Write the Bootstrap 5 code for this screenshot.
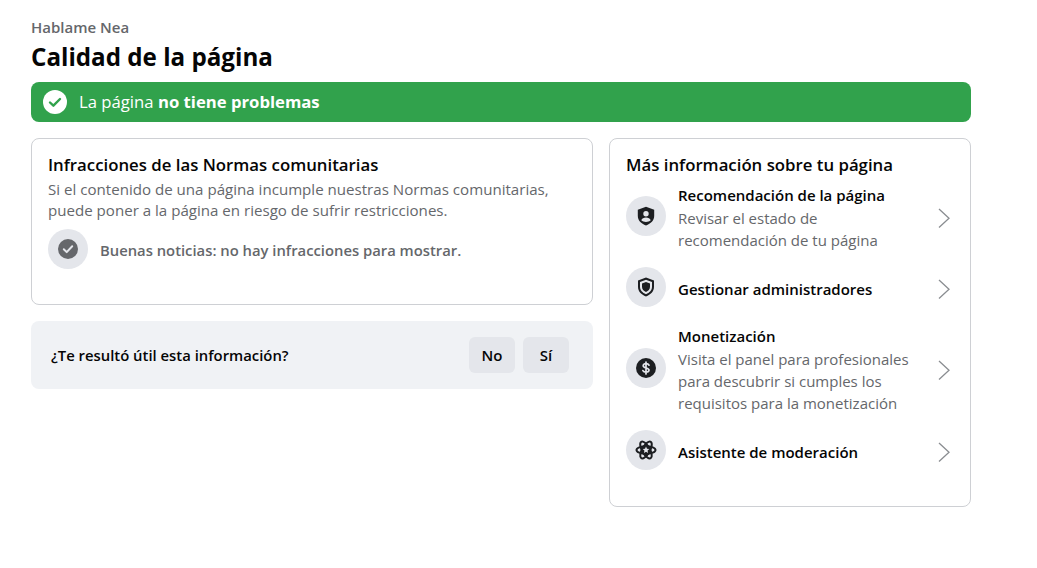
<!doctype html>
<html lang="es"><head><meta charset="utf-8"><title>Calidad de la página</title>
<link href="https://cdn.jsdelivr.net/npm/bootstrap@5.3.0/dist/css/bootstrap.min.css" rel="stylesheet">
<style>
body{font-family:"Open Sans","Noto Sans",sans-serif;background:#fff;color:#050505;overflow:hidden}
.pg-wrap{width:940px;margin-left:31px;padding-top:17px}
.pg-owner{font-size:15px;line-height:20px;font-weight:600;color:#65676b}
.pg-title{font-size:24.2px;line-height:32px;font-weight:700;color:#050505;margin:4px 0 9px}
.pg-banner{background:#31a24c;color:#fff;height:40px;border-radius:8px;padding:0 12px;font-size:16.7px;gap:12px}
.pg-banner b{font-weight:700}
.pg-cols{margin-top:16px;gap:16px}
.pg-left{width:562px}
.pg-right{width:362px;height:369px;padding:16px;border:1px solid #ced0d4;border-radius:8px}
.pg-card{height:167px;border:1px solid #ced0d4;border-radius:8px;padding:16px}
.pg-h{font-size:16.8px;line-height:20px;font-weight:600;color:#050505;margin:0}
.pg-card .pg-h{margin-bottom:4px}
.pg-sub{font-size:15.1px;line-height:21px;color:#65676b;margin:0}
.pg-circ{width:40px;height:40px;border-radius:50%;background:#e4e6eb;flex:none}
.pg-good{font-size:14.8px;font-weight:600;color:#65676b;gap:12px;margin-top:8px}
.pg-goodtxt{padding-top:2px}
.pg-ask{margin-top:16px;height:68px;background:#f0f2f5;border-radius:8px;padding:0 24px 0 20px;font-size:14.85px;font-weight:600}
.pg-btn{width:46px;height:36px;background:#e4e6eb;border:0;border-radius:6px;font-size:15px;font-weight:600;color:#050505;padding:0}
.pg-row{gap:12px;font-size:15px}
.pg-row b{display:block;font-weight:600;line-height:20px;color:#050505}
.pg-row span{display:block;color:#65676b;line-height:22px;font-size:15px;margin-top:2px}
.pg-txt{flex:1;padding-top:4px}
.pg-chev{margin:4px 3px 0 0;flex:none}
.pg-row1{height:68px;margin-top:7px}.pg-row2{height:40px;margin-top:17px}.pg-row3{height:90px;margin-top:16px}.pg-row4{height:40px;margin-top:17px}
</style></head><body>
<div class="pg-wrap">
<div class="pg-owner">Hablame Nea</div>
<h1 class="pg-title">Calidad de la página</h1>
<div class="pg-banner d-flex align-items-center">
<svg width="24" height="24" viewBox="0 0 24 24"><circle cx="12" cy="12" r="12" fill="#fff"/><path d="M7 12.5l3.4 3.2L17 9" fill="none" stroke="#31a24c" stroke-width="2.4" stroke-linecap="round" stroke-linejoin="round"/></svg>
<div>La página <b>no tiene problemas</b></div>
</div>
<div class="pg-cols d-flex align-items-start">
<div class="pg-left">
<div class="pg-card">
<h2 class="pg-h">Infracciones de las Normas comunitarias</h2>
<p class="pg-sub">Si el contenido de una página incumple nuestras Normas comunitarias,<br>puede poner a la página en riesgo de sufrir restricciones.</p>
<div class="pg-good d-flex align-items-center">
<div class="pg-circ d-flex align-items-center justify-content-center"><svg width="20" height="20" viewBox="0 0 20 20"><circle cx="10" cy="10" r="10" fill="#65676b"/><path d="M5.8 10.3l2.9 2.8 5.500-5.800" fill="none" stroke="#e4e6eb" stroke-width="2" stroke-linecap="round" stroke-linejoin="round"/></svg></div>
<div class="pg-goodtxt">Buenas noticias: no hay infracciones para mostrar.</div>
</div>
</div>
<div class="pg-ask d-flex align-items-center justify-content-between">
<div>¿Te resultó útil esta información?</div>
<div class="d-flex gap-2"><button class="btn pg-btn">No</button><button class="btn pg-btn">Sí</button></div>
</div>
</div>
<div class="pg-right">
<h2 class="pg-h">Más información sobre tu página</h2>
<div class="pg-row pg-row1 d-flex align-items-center">
<div class="pg-circ d-flex align-items-center justify-content-center"><svg width="20" height="20" viewBox="0 0 20 20"><path fill="#1c1e21" fill-rule="evenodd" d="M10 .8l8.200 3v6c0 4.600-3.300 8-8.200 9.600-4.900-1.600-8.200-5-8.200-9.600v-6z M10 5a2.700 2.700 0 1 0 0 5.400A2.700 2.700 0 0 0 10 5z M5.300 14.200c.6-1.900 2.500-2.800 4.700-2.800s4.100.9 4.700 2.800c-1.200 1.100-2.900 1.700-4.700 1.700s-3.500-.6-4.700-1.700z"/></svg></div>
<div class="pg-txt"><b>Recomendación de la página</b><span>Revisar el estado de<br>recomendación de tu página</span></div>
<svg class="pg-chev" width="14" height="20" viewBox="0 0 14 20"><path d="M2 1l10 9.300L2 19.500" fill="none" stroke="#8a8d91" stroke-width="1.300"/></svg>
</div>
<div class="pg-row pg-row2 d-flex align-items-center">
<div class="pg-circ d-flex align-items-center justify-content-center"><svg width="20" height="20" viewBox="0 0 20 20"><path fill="#1c1e21" fill-rule="evenodd" d="M10 .6l8 3v6.200c0 4.600-3.300 8-8 9.600-4.700-1.600-8-5-8-9.600V3.600z M10 2.800L4 5v4.800c0 3.400 2.400 6 6 7.400 3.600-1.400 6-4 6-7.400V5z M10 5l4 1.500v3.300c0 2.400-1.600 4.200-4 5.200-2.400-1-4-2.800-4-5.200V6.500z"/></svg></div>
<div class="pg-txt"><b>Gestionar administradores</b></div>
<svg class="pg-chev" width="14" height="20" viewBox="0 0 14 20"><path d="M2 1l10 9.300L2 19.500" fill="none" stroke="#8a8d91" stroke-width="1.300"/></svg>
</div>
<div class="pg-row pg-row3 d-flex align-items-center">
<div class="pg-circ d-flex align-items-center justify-content-center"><svg width="20" height="20" viewBox="0 0 20 20"><circle cx="10" cy="10" r="10" fill="#1c1e21"/><path d="M13 7.200c-.5-1-1.600-1.500-3-1.500-1.600 0-2.800.8-2.800 2.100 0 2.800 5.800 1.500 5.800 4.300 0 1.300-1.300 2.100-3 2.100-1.500 0-2.600-.6-3.100-1.600M10 4v12" fill="none" stroke="#e4e6eb" stroke-width="1.700" stroke-linecap="round"/></svg></div>
<div class="pg-txt"><b>Monetización</b><span>Visita el panel para profesionales<br>para descubrir si cumples los<br>requisitos para la monetización</span></div>
<svg class="pg-chev" width="14" height="20" viewBox="0 0 14 20"><path d="M2 1l10 9.300L2 19.500" fill="none" stroke="#8a8d91" stroke-width="1.300"/></svg>
</div>
<div class="pg-row pg-row4 d-flex align-items-center">
<div class="pg-circ d-flex align-items-center justify-content-center"><svg width="22" height="22" viewBox="0 0 22 22"><g fill="none" stroke="#1c1e21" stroke-width="2"><ellipse cx="11" cy="11" rx="9.500" ry="3.800"/><ellipse cx="11" cy="11" rx="9.500" ry="3.800" transform="rotate(60 11 11)"/><ellipse cx="11" cy="11" rx="9.500" ry="3.800" transform="rotate(120 11 11)"/></g><circle cx="11" cy="11" r="5.200" fill="#1c1e21"/><path fill="#e4e6eb" d="M11 7.600l1 2.100 2.300.3-1.700 1.600.4 2.300-2-1.100-2 1.100.4-2.300-1.700-1.600 2.300-.3z"/></svg></div>
<div class="pg-txt"><b>Asistente de moderación</b></div>
<svg class="pg-chev" width="14" height="20" viewBox="0 0 14 20"><path d="M2 1l10 9.300L2 19.500" fill="none" stroke="#8a8d91" stroke-width="1.300"/></svg>
</div>
</div>
</div>
</div>
</body></html>
